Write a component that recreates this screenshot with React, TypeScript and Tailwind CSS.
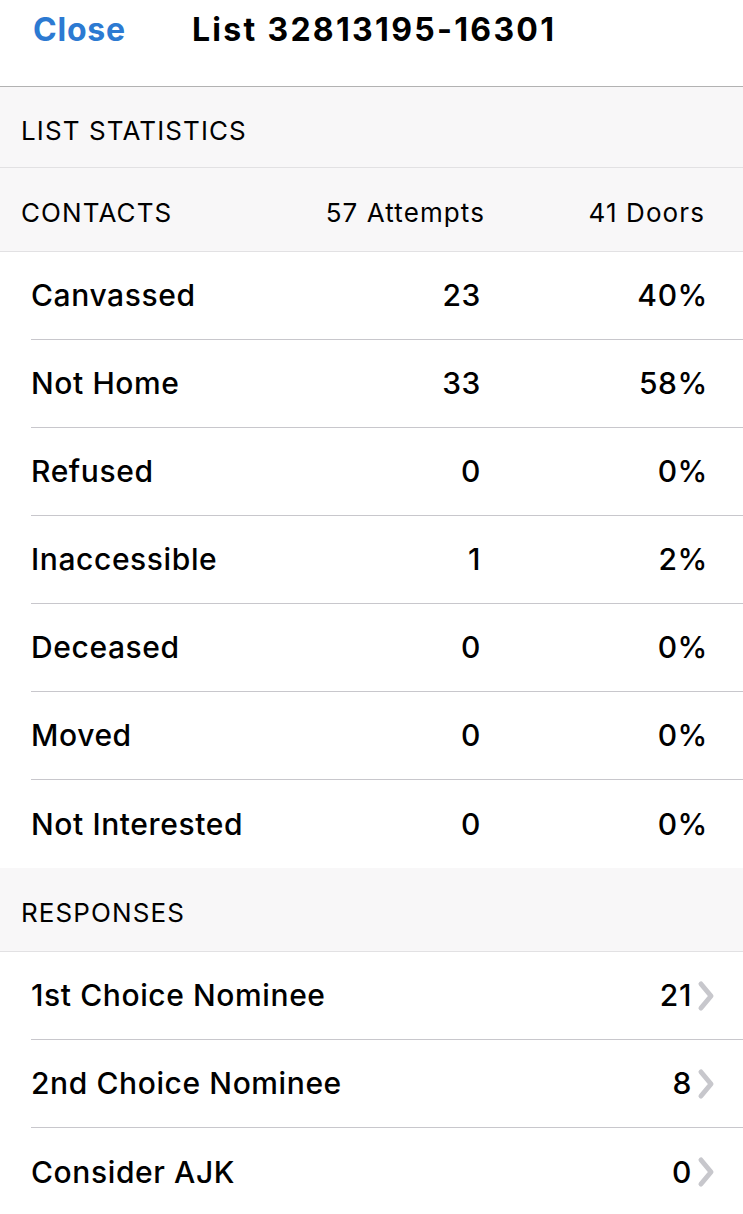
import React from 'react';

type ContactRow = { label: string; count: number; pct: string };
type ResponseRow = { label: string; count: number };

const contacts: ContactRow[] = [
  { label: 'Canvassed', count: 23, pct: '40%' },
  { label: 'Not Home', count: 33, pct: '58%' },
  { label: 'Refused', count: 0, pct: '0%' },
  { label: 'Inaccessible', count: 1, pct: '2%' },
  { label: 'Deceased', count: 0, pct: '0%' },
  { label: 'Moved', count: 0, pct: '0%' },
  { label: 'Not Interested', count: 0, pct: '0%' },
];

const responses: ResponseRow[] = [
  { label: '1st Choice Nominee', count: 21 },
  { label: '2nd Choice Nominee', count: 8 },
  { label: 'Consider AJK', count: 0 },
];

const Chevron = () => (
  <svg width="18" height="32" viewBox="0 0 18 32" className="ml-[5px] shrink-0">
    <path d="M4 4 L14 16 L4 28" fill="none" stroke="#c7c7cc" strokeWidth="5" strokeLinecap="round" strokeLinejoin="round" />
  </svg>
);

const SectionHeader: React.FC<{ children: React.ReactNode; className?: string }> = ({ children, className = '' }) => (
  <div className={`bg-[#f8f7f8] px-[21px] pt-[6px] flex items-center text-[26px] tracking-[1.1px] text-black ${className}`}>{children}</div>
);

export default function App() {
  return (
    <div className="w-[743px] h-[1214px] overflow-hidden bg-white font-['Inter','Liberation_Sans',sans-serif] text-black">
      {/* nav bar */}
      <div className="h-[87px] border-b border-[#b2b2b2] flex items-start pt-[8px]">
        <button className="ml-[33px] text-[32px] font-bold tracking-[0.8px] text-[#2c7ad2] leading-[44px]">Close</button>
        <div className="ml-[66px] text-[32px] font-bold tracking-[2.3px] leading-[44px]">List 32813195-16301</div>
      </div>

      <SectionHeader className="h-[81px] border-b border-[#e2e1e3]">LIST STATISTICS</SectionHeader>

      <SectionHeader className="h-[84px] border-b border-[#e2e1e3]">
        <span className="flex-1">CONTACTS</span>
        <span className="w-[200px] text-right mr-[60px]">57 Attempts</span>
        <span className="w-[160px] text-right mr-[17px]">41 Doors</span>
      </SectionHeader>

      <div>
        {contacts.map((c, i) => (
          <div key={c.label} className="pl-[31px]">
            <div
              className={`h-[88px] flex items-center pr-[35px] text-[30px] font-medium tracking-[0.6px] ${
                i < contacts.length - 1 ? 'border-b border-[#c8c7cc]' : ''
              }`}
            >
              <span className="flex-1">{c.label}</span>
              <span className="w-[120px] text-right">{c.count}</span>
              <span className="w-[227px] text-right">{c.pct}</span>
            </div>
          </div>
        ))}
      </div>

      <SectionHeader className="h-[84px] border-b border-[#e2e1e3]">RESPONSES</SectionHeader>

      <div>
        {responses.map((r, i) => (
          <div key={r.label} className="pl-[31px]">
            <div
              className={`h-[88px] flex items-center pr-[28px] text-[30px] font-medium tracking-[0.6px] ${
                i < responses.length - 1 ? 'border-b border-[#c8c7cc]' : ''
              }`}
            >
              <span className="flex-1">{r.label}</span>
              <span>{r.count}</span>
              <Chevron />
            </div>
          </div>
        ))}
      </div>
    </div>
  );
}
